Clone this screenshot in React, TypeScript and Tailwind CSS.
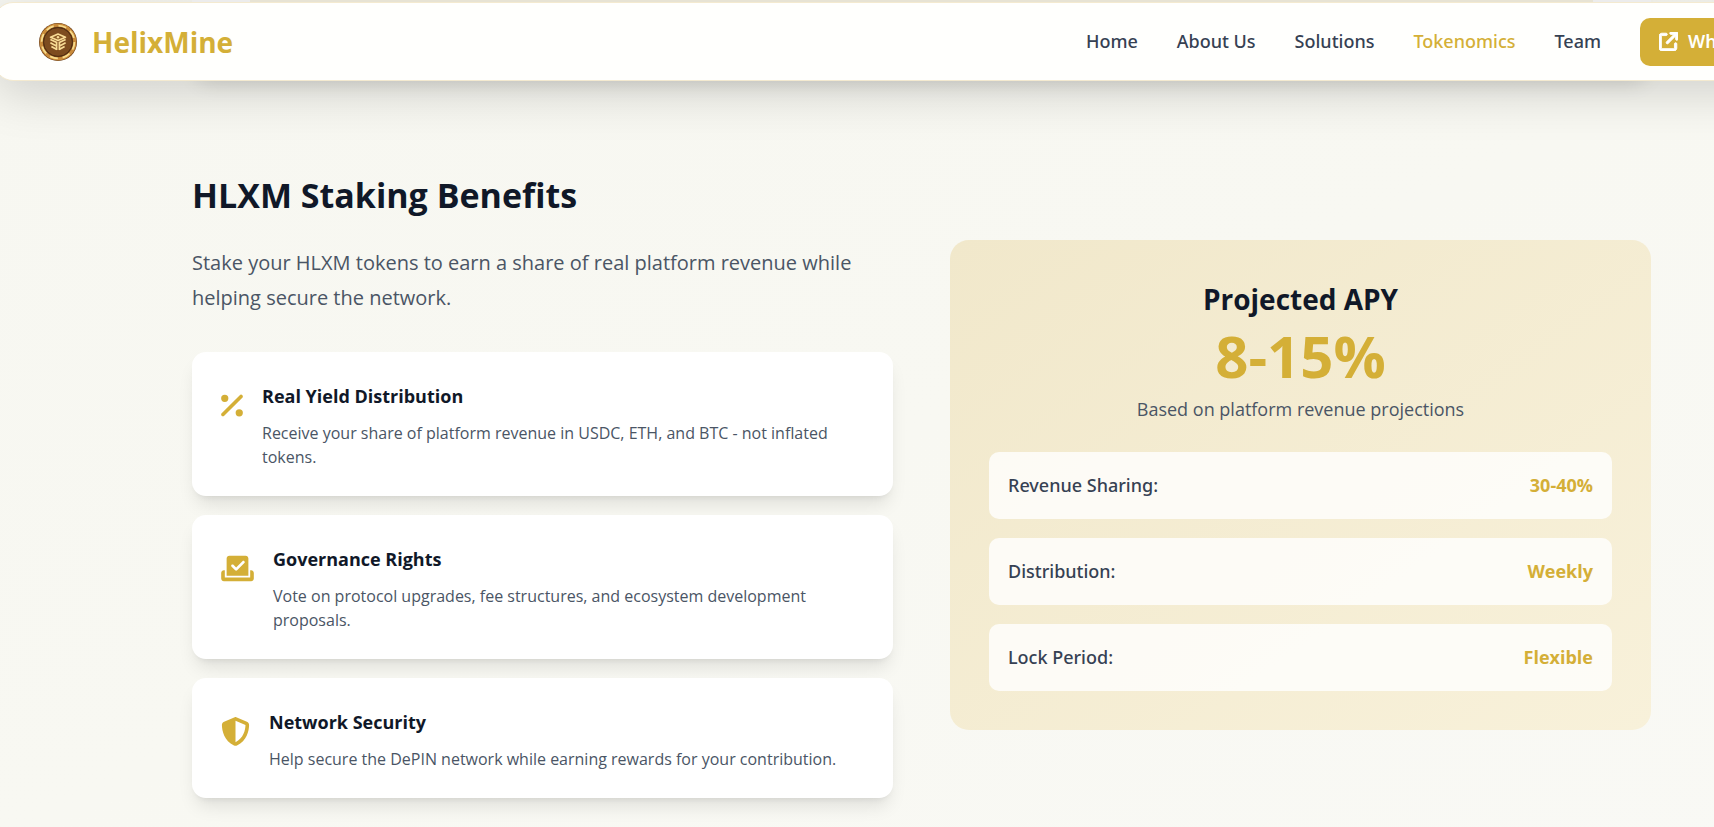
import {
  FaArrowUpRightFromSquare,
  FaCheckToSlot,
  FaPercent,
  FaShieldHalved,
} from 'react-icons/fa6';
import type { IconType } from 'react-icons';

type Benefit = {
  icon: IconType;
  iconWidth: string;
  title: string;
  text: string;
};

const links = ['Home', 'About Us', 'Solutions', 'Tokenomics', 'Team'];

const benefits: Benefit[] = [
  {
    icon: FaPercent,
    iconWidth: 'w-[22px]',
    title: 'Real Yield Distribution',
    text: 'Receive your share of platform revenue in USDC, ETH, and BTC - not inflated tokens.',
  },
  {
    icon: FaCheckToSlot,
    iconWidth: 'w-[33px]',
    title: 'Governance Rights',
    text: 'Vote on protocol upgrades, fee structures, and ecosystem development proposals.',
  },
  {
    icon: FaShieldHalved,
    iconWidth: 'w-[29px]',
    title: 'Network Security',
    text: 'Help secure the DePIN network while earning rewards for your contribution.',
  },
];

const terms = [
  { label: 'Revenue Sharing:', value: '30-40%' },
  { label: 'Distribution:', value: 'Weekly' },
  { label: 'Lock Period:', value: 'Flexible' },
];

const CoinLogo = () => (
  <svg viewBox="0 0 38 38" className="h-[38px] w-[38px]" aria-hidden="true">
    <circle cx="19" cy="19" r="19" fill="#6b3f1a" />
    <circle cx="19" cy="19" r="16.8" fill="none" stroke="#c98b3a" strokeWidth="3.2" />
    <circle
      cx="19"
      cy="19"
      r="16.4"
      fill="none"
      stroke="#f7dc8c"
      strokeWidth="1.8"
      strokeDasharray="8 4.88"
    />
    <circle cx="19" cy="19" r="14.4" fill="#7d4c1f" stroke="#4f2c10" strokeWidth="1" />
    <path
      d="M19 11l7.5 3.2L19 17.6l-7.5-3.4z"
      fill="#8a5a26"
      stroke="#f8dc96"
      strokeWidth="1.6"
      strokeLinejoin="round"
    />
    <circle cx="19" cy="14.3" r="1.2" fill="#f8dc96" />
    <path
      d="M11.4 16.4l6.4 3.2M11.4 19.8l6.4 3.4M12.4 23.4l5.4 3M26.6 16.4l-6.4 3.2M26.6 19.8l-6.4 3.4M25.6 23.4l-5.4 3M17.6 19v8M20.4 19v8"
      fill="none"
      stroke="#f8dc96"
      strokeWidth="1.7"
    />
  </svg>
);

const Navbar = () => (
  <header className="absolute inset-x-0 top-[2px] z-10 -mx-1.5 flex h-[79px] items-center justify-between rounded-[19px] border border-[#f4ead0] bg-[#fffffd] pr-[38px] pl-11 shadow-[0_12px_50px_rgba(0,0,0,0.16)]">
    <a href="#home" className="flex items-center gap-[15px]">
      <CoinLogo />
      <span className="text-[28px] font-bold text-[#d4af37]">HelixMine</span>
    </a>
    <nav className="flex items-center gap-[39px] font-['Noto_Sans',sans-serif] text-[18px] font-medium">
      {links.map((link) => (
        <a
          key={link}
          href={`#${link}`}
          className={link === 'Tokenomics' ? 'text-[#d4af37]' : 'text-gray-700'}
        >
          {link}
        </a>
      ))}
      <a
        href="#whitepaper"
        className="flex h-12 items-center gap-[10px] rounded-[10px] bg-[#d4af37] px-[19px] font-semibold text-white"
      >
        <FaArrowUpRightFromSquare className="h-[19px] w-[19px]" strokeWidth={24} />
        Whitepaper
      </a>
    </nav>
  </header>
);

const BenefitCard = ({ icon: Icon, iconWidth, title, text }: Benefit) => (
  <li className="flex items-start gap-[19px] rounded-[14px] bg-white px-[29px] pt-[30px] pb-[27px] shadow-[0_12px_18px_-4px_rgba(0,0,0,0.1),0_5px_7px_-5px_rgba(0,0,0,0.1)]">
    <Icon className={`mt-[9px] h-[29px] shrink-0 text-[#d4af37] ${iconWidth}`} />
    <div>
      <h3 className="mb-[11px] text-[18px] leading-7 font-bold text-gray-900">
        {title}
      </h3>
      <p className="text-base text-gray-600">{text}</p>
    </div>
  </li>
);

const App = () => {
  return (
    <div className="min-h-screen overflow-hidden font-['Open_Sans',sans-serif]">
      <div className="relative min-h-screen w-[calc(100%+129px)] bg-linear-to-br from-[#f7f7f1] via-[#f8f8f2] to-[#f9f9f5] pb-7">
        <Navbar />

        {/* tail of the previous section, scrolled under the navbar */}
        <div className="mx-auto h-[77px] max-w-[1459px] rounded-b-[19px] bg-[#f8f8f8] px-[58px] shadow-[0_10px_20px_-4px_rgba(0,0,0,0.13)]">
          <div className="h-4 bg-[#f3efdf]" />
        </div>

        <section className="mx-auto grid max-w-[1459px] grid-cols-2 items-center gap-[57px] pt-[95px]">
          <div>
            <h2 className="mb-[27px] text-[34px] leading-[46px] font-bold text-gray-900">
              HLXM Staking Benefits
            </h2>
            <p className="mb-[37px] text-xl leading-[35px] text-gray-600">
              Stake your HLXM tokens to earn a share of real platform revenue while
              helping secure the network.
            </p>
            <ul className="flex flex-col gap-[19px]">
              {benefits.map((benefit) => (
                <BenefitCard key={benefit.title} {...benefit} />
              ))}
            </ul>
          </div>

          <div className="rounded-[19px] bg-linear-to-br from-[#f1e8cb] to-[#f8f1da] p-[39px]">
            <div className="mb-[27px] text-center">
              <h3 className="text-[28px] leading-10 font-bold text-gray-900">
                Projected APY
              </h3>
              <div className="text-[58px] leading-[74px] font-bold text-[#d4af37]">
                8-15%
              </div>
              <p className="text-[18px] leading-8 text-gray-600">
                Based on platform revenue projections
              </p>
            </div>
            <dl className="flex flex-col gap-[19px] text-[18px]">
              {terms.map((term) => (
                <div
                  key={term.label}
                  className="flex h-[67px] items-center justify-between rounded-[10px] bg-white/80 px-[19px]"
                >
                  <dt className="font-['Noto_Sans',sans-serif] font-medium text-gray-700">
                    {term.label}
                  </dt>
                  <dd className="font-bold text-[#d4af37]">{term.value}</dd>
                </div>
              ))}
            </dl>
          </div>
        </section>
      </div>
    </div>
  );
};

export default App;
